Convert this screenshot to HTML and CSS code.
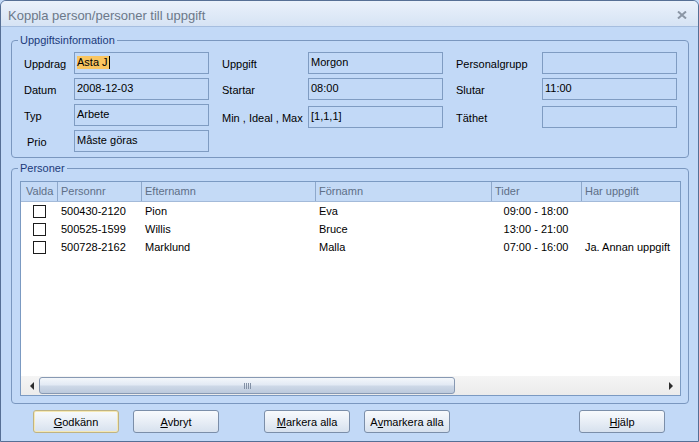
FILE: index.html
```html
<!DOCTYPE html>
<html lang="sv">
<head>
<meta charset="utf-8">
<title>Koppla person/personer till uppgift</title>
<link rel="stylesheet" href="styles.css">
</head>
<body>
<div class="window">
  <div class="titlebar">
    <span class="title">Koppla person/personer till uppgift</span>
    <svg class="close" width="10" height="8" viewBox="0 0 10 8"><path d="M1 0.5 L9 7.5 M9 0.5 L1 7.5" stroke="#8b96a5" stroke-width="2" fill="none"/></svg>
  </div>
  <div class="content">
    <fieldset class="group">
      <legend>Uppgiftsinformation</legend>
      <div class="form">
        <div class="lbl">Uppdrag</div>
        <div class="field"><span class="sel">Asta J</span></div>
        <div class="lbl lbl-mid">Uppgift</div>
        <div class="field">Morgon</div>
        <div class="lbl lbl-mid">Personalgrupp</div>
        <div class="field"></div>

        <div class="lbl">Datum</div>
        <div class="field">2008-12-03</div>
        <div class="lbl lbl-mid">Startar</div>
        <div class="field">08:00</div>
        <div class="lbl lbl-mid">Slutar</div>
        <div class="field">11:00</div>

        <div class="lbl">Typ</div>
        <div class="field">Arbete</div>
        <div class="lbl lbl-mid shift">Min , Ideal , Max</div>
        <div class="field shift">[1,1,1]</div>
        <div class="lbl lbl-mid shift">Täthet</div>
        <div class="field shift"></div>

        <div class="lbl lbl-indent">Prio</div>
        <div class="field">Måste göras</div>
      </div>
    </fieldset>

    <fieldset class="group persons">
      <legend>Personer</legend>
      <div class="persons-body">
        <div class="listview">
          <div class="lv-head">
            <div>Valda</div>
            <div>Personnr</div>
            <div>Efternamn</div>
            <div>Förnamn</div>
            <div>Tider</div>
            <div>Har uppgift</div>
          </div>
          <div class="lv-body">
            <div class="lv-row">
              <div class="chk-cell"><span class="chk"></span></div>
              <div>500430-2120</div>
              <div>Pion</div>
              <div>Eva</div>
              <div class="center">09:00 - 18:00</div>
              <div></div>
            </div>
            <div class="lv-row">
              <div class="chk-cell"><span class="chk"></span></div>
              <div>500525-1599</div>
              <div>Willis</div>
              <div>Bruce</div>
              <div class="center">13:00 - 21:00</div>
              <div></div>
            </div>
            <div class="lv-row">
              <div class="chk-cell"><span class="chk"></span></div>
              <div>500728-2162</div>
              <div>Marklund</div>
              <div>Malla</div>
              <div class="center">07:00 - 16:00</div>
              <div>Ja. Annan uppgift</div>
            </div>
          </div>
          <div class="hscroll">
            <div class="arrow arrow-l"></div>
            <div class="thumb"><span class="grip"></span></div>
            <div class="track"></div>
            <div class="arrow arrow-r"></div>
          </div>
        </div>
      </div>
    </fieldset>

    <div class="buttons">
      <button class="btn default"><u>G</u>odkänn</button>
      <button class="btn"><u>A</u>vbryt</button>
      <button class="btn far"><u>M</u>arkera alla</button>
      <button class="btn">A<u>v</u>markera alla</button>
      <button class="btn help"><u>H</u>jälp</button>
    </div>
  </div>
</div>
</body>
</html>
```

FILE: styles.css
```css
html, body {
  margin: 0;
  padding: 0;
  background: #c2d9f7;
}

.window {
  width: 699px;
  height: 442px;
  box-sizing: border-box;
  border: 1px solid #566f95;
  border-radius: 6px 6px 0 0;
  background: #c2d9f7;
  display: flex;
  flex-direction: column;
  overflow: hidden;
  font-family: "Liberation Sans", Arial, sans-serif;
  font-size: 11px;
  color: #000;
}

.titlebar {
  height: 26px;
  box-sizing: border-box;
  flex: none;
  display: flex;
  align-items: center;
  justify-content: space-between;
  padding: 4px 11px 0 7px;
  background: linear-gradient(#eaf1fb, #d6e3f4);
  border-bottom: 1px solid #a6bedf;
}

.title {
  font-size: 13px;
  color: #6c7889;
}

.close {
  display: block;
  margin-bottom: 2px;
}

.content {
  flex: 1;
  display: flex;
  flex-direction: column;
  padding: 7px 9px 0 10px;
}

.group {
  margin: 0;
  padding: 0;
  border: 1px solid #7a97bf;
  border-radius: 4px;
  min-width: 0;
}

.group legend {
  margin-left: 6px;
  padding: 0 2px;
  line-height: 13px;
  font-size: 11px;
  color: #1b3a7a;
}

.form {
  display: grid;
  grid-template-columns: 50px 135px 99px 135px 99px 135px;
  grid-auto-rows: 22px;
  row-gap: 4px;
  padding: 5px 10px 5px 12px;
}

.lbl {
  display: flex;
  align-items: center;
  padding-top: 1px;
  white-space: nowrap;
}

.lbl-mid {
  padding-left: 13px;
}

.lbl-indent {
  padding-left: 3px;
}

.field {
  border: 1px solid #7f9cc2;
  padding: 2px 2px 0;
  line-height: 14px;
  white-space: nowrap;
  overflow: hidden;
}

.shift {
  margin-top: 2px;
  margin-bottom: -2px;
}

.sel {
  display: inline-block;
  line-height: 13px;
  background: #f9c560;
  border-right: 1px solid #000;
  padding-right: 1px;
}

.persons {
  margin-top: 4px;
}

.persons-body {
  padding: 6px 7px 7px 8px;
}

.listview {
  height: 215px;
  box-sizing: border-box;
  border: 1px solid #7b9ac2;
  background: #fff;
  display: flex;
  flex-direction: column;
}

.lv-head,
.lv-row {
  display: grid;
  grid-template-columns: 36px 84px 174px 176px 90px 1fr;
}

.lv-head {
  height: 20px;
  box-sizing: border-box;
  background: #c4daf6;
  border-bottom: 1px solid #a3bad9;
  color: #5e6f87;
}

.lv-head > div {
  border-left: 1px solid #8ea8cb;
  padding-left: 3px;
  line-height: 19px;
  white-space: nowrap;
}

.lv-head > div:first-child {
  border-left: 0;
  padding-left: 5px;
}

.lv-body {
  flex: 1;
}

.lv-row {
  height: 18px;
  align-items: center;
}

.lv-row > div {
  padding-left: 4px;
  white-space: nowrap;
}

.lv-row > .chk-cell {
  padding-left: 0;
  display: flex;
  justify-content: center;
}

.lv-row > .center {
  padding-left: 0;
  text-align: center;
}

.chk {
  display: block;
  width: 13px;
  height: 13px;
  box-sizing: border-box;
  border: 1px solid #1c1c1c;
  background: #fff;
}

.hscroll {
  height: 19px;
  flex: none;
  display: flex;
  align-items: center;
  background: linear-gradient(#f5f5f5, #ebebeb);
}

.arrow {
  width: 18px;
  height: 19px;
  box-sizing: border-box;
  display: flex;
  align-items: center;
  justify-content: center;
}

.arrow-l {
  padding-left: 3px;
}

.arrow-l::before {
  content: "";
  border-style: solid;
  border-width: 4px 4px 4px 0;
  border-color: transparent #2d2d2d transparent transparent;
}

.arrow-r::before {
  content: "";
  border-style: solid;
  border-width: 4px 0 4px 4px;
  border-color: transparent transparent transparent #2d2d2d;
}

.thumb {
  width: 416px;
  height: 17px;
  box-sizing: border-box;
  border: 1px solid #8799b3;
  border-radius: 3px;
  background: linear-gradient(#f4f7fb, #e3eaf4 45%, #cdd8e7 55%, #bccadd);
  display: flex;
  align-items: center;
  justify-content: center;
}

.grip {
  display: block;
  width: 7px;
  height: 6px;
  background: repeating-linear-gradient(90deg, #8391a6 0 1px, transparent 1px 2px);
}

.track {
  flex: 1;
}

.buttons {
  display: flex;
  padding: 0 24px 0 22px;
  margin-top: 6px;
}

.btn {
  width: 86px;
  height: 23px;
  box-sizing: border-box;
  margin: 0;
  padding: 0;
  border: 1px solid #7b8ea9;
  border-radius: 3px;
  background: linear-gradient(#f8fafd, #e8eef6 50%, #d7e1ee);
  display: flex;
  align-items: center;
  justify-content: center;
  font-family: inherit;
  font-size: 11px;
  color: #000;
}

.btn + .btn {
  margin-left: 14px;
}

.btn.far {
  margin-left: 45px;
}

.btn.help {
  margin-left: auto;
}

.btn.default {
  border-color: #bfb383;
  box-shadow: inset 0 0 0 1px #f5e8b4;
}
```
